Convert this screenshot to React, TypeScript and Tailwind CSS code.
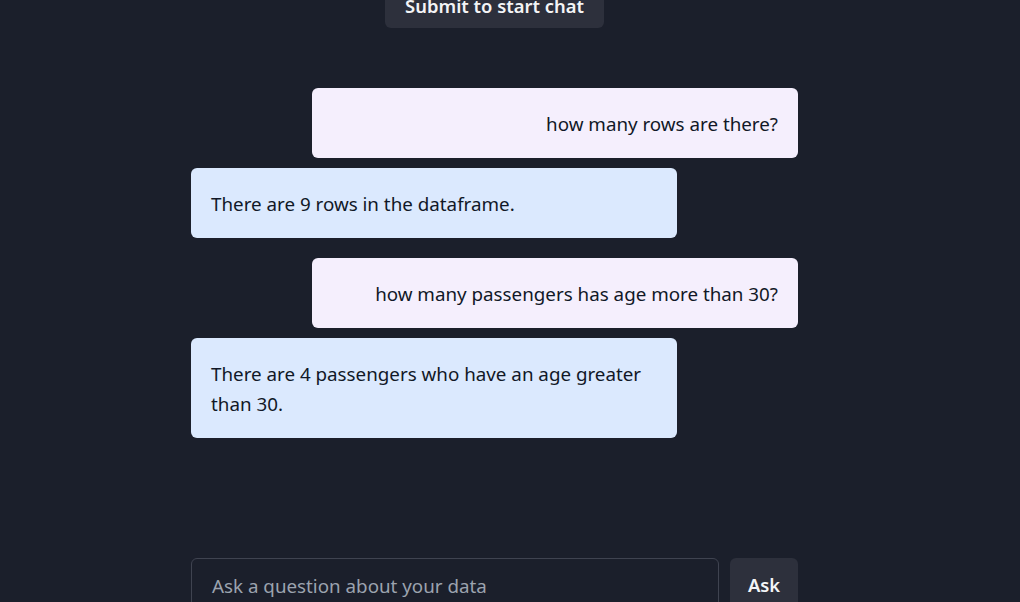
const messages = [
  { role: 'user', text: 'how many rows are there?' },
  { role: 'assistant', text: 'There are 9 rows in the dataframe.' },
  { role: 'user', text: 'how many passengers has age more than 30?' },
  { role: 'assistant', text: 'There are 4 passengers who have an age greater than 30.' },
]

function Bubble({ role, text }: { role: string; text: string }) {
  const isUser = role === 'user'
  return (
    <div className={isUser ? 'flex justify-end' : 'flex justify-start'}>
      <div
        className={
          isUser
            ? 'w-[486px] rounded-md bg-[#f5effd] px-5 pt-[21px] pb-[19px] text-right text-[#111827]'
            : 'w-[486px] rounded-md bg-[#dbe9fe] px-5 pt-[21px] pb-[19px] text-left text-[#111827]'
        }
      >
        {text}
      </div>
    </div>
  )
}

export default function App() {
  return (
    <div className="flex h-[602px] w-full flex-col overflow-hidden bg-[#1b1f2b] font-['Noto_Sans',sans-serif] text-[18.8px] leading-[30px]">
      <div className="ml-[191px] flex w-[607px] flex-1 flex-col">
        <div className="flex justify-center">
          <button className="-mt-[18px] h-[46px] rounded-md bg-[#2d303c] px-5 pt-[2px] text-[18.4px] font-semibold text-[#f3f4f6]">
            Submit to start chat
          </button>
        </div>
        <div className="mt-[60px] flex flex-col">
          {messages.map((m, i) => (
            <div key={i} className={i === 0 ? '' : m.role === 'user' ? 'mt-5' : 'mt-2.5'}>
              <Bubble role={m.role} text={m.text} />
            </div>
          ))}
        </div>
        <div className="flex-1" />
        <div className="-mb-[10px] flex gap-[11px]">
          <div className="flex h-[54px] flex-1 items-center rounded-md border border-[#3f4350] bg-[#1b1f2b] px-5 pt-[1px] text-[#9ca3af]">
            Ask a question about your data
          </div>
          <button className="h-[54px] w-[68px] rounded-md bg-[#2d303c] text-[18.4px] font-semibold text-[#f3f4f6]">
            Ask
          </button>
        </div>
      </div>
    </div>
  )
}
